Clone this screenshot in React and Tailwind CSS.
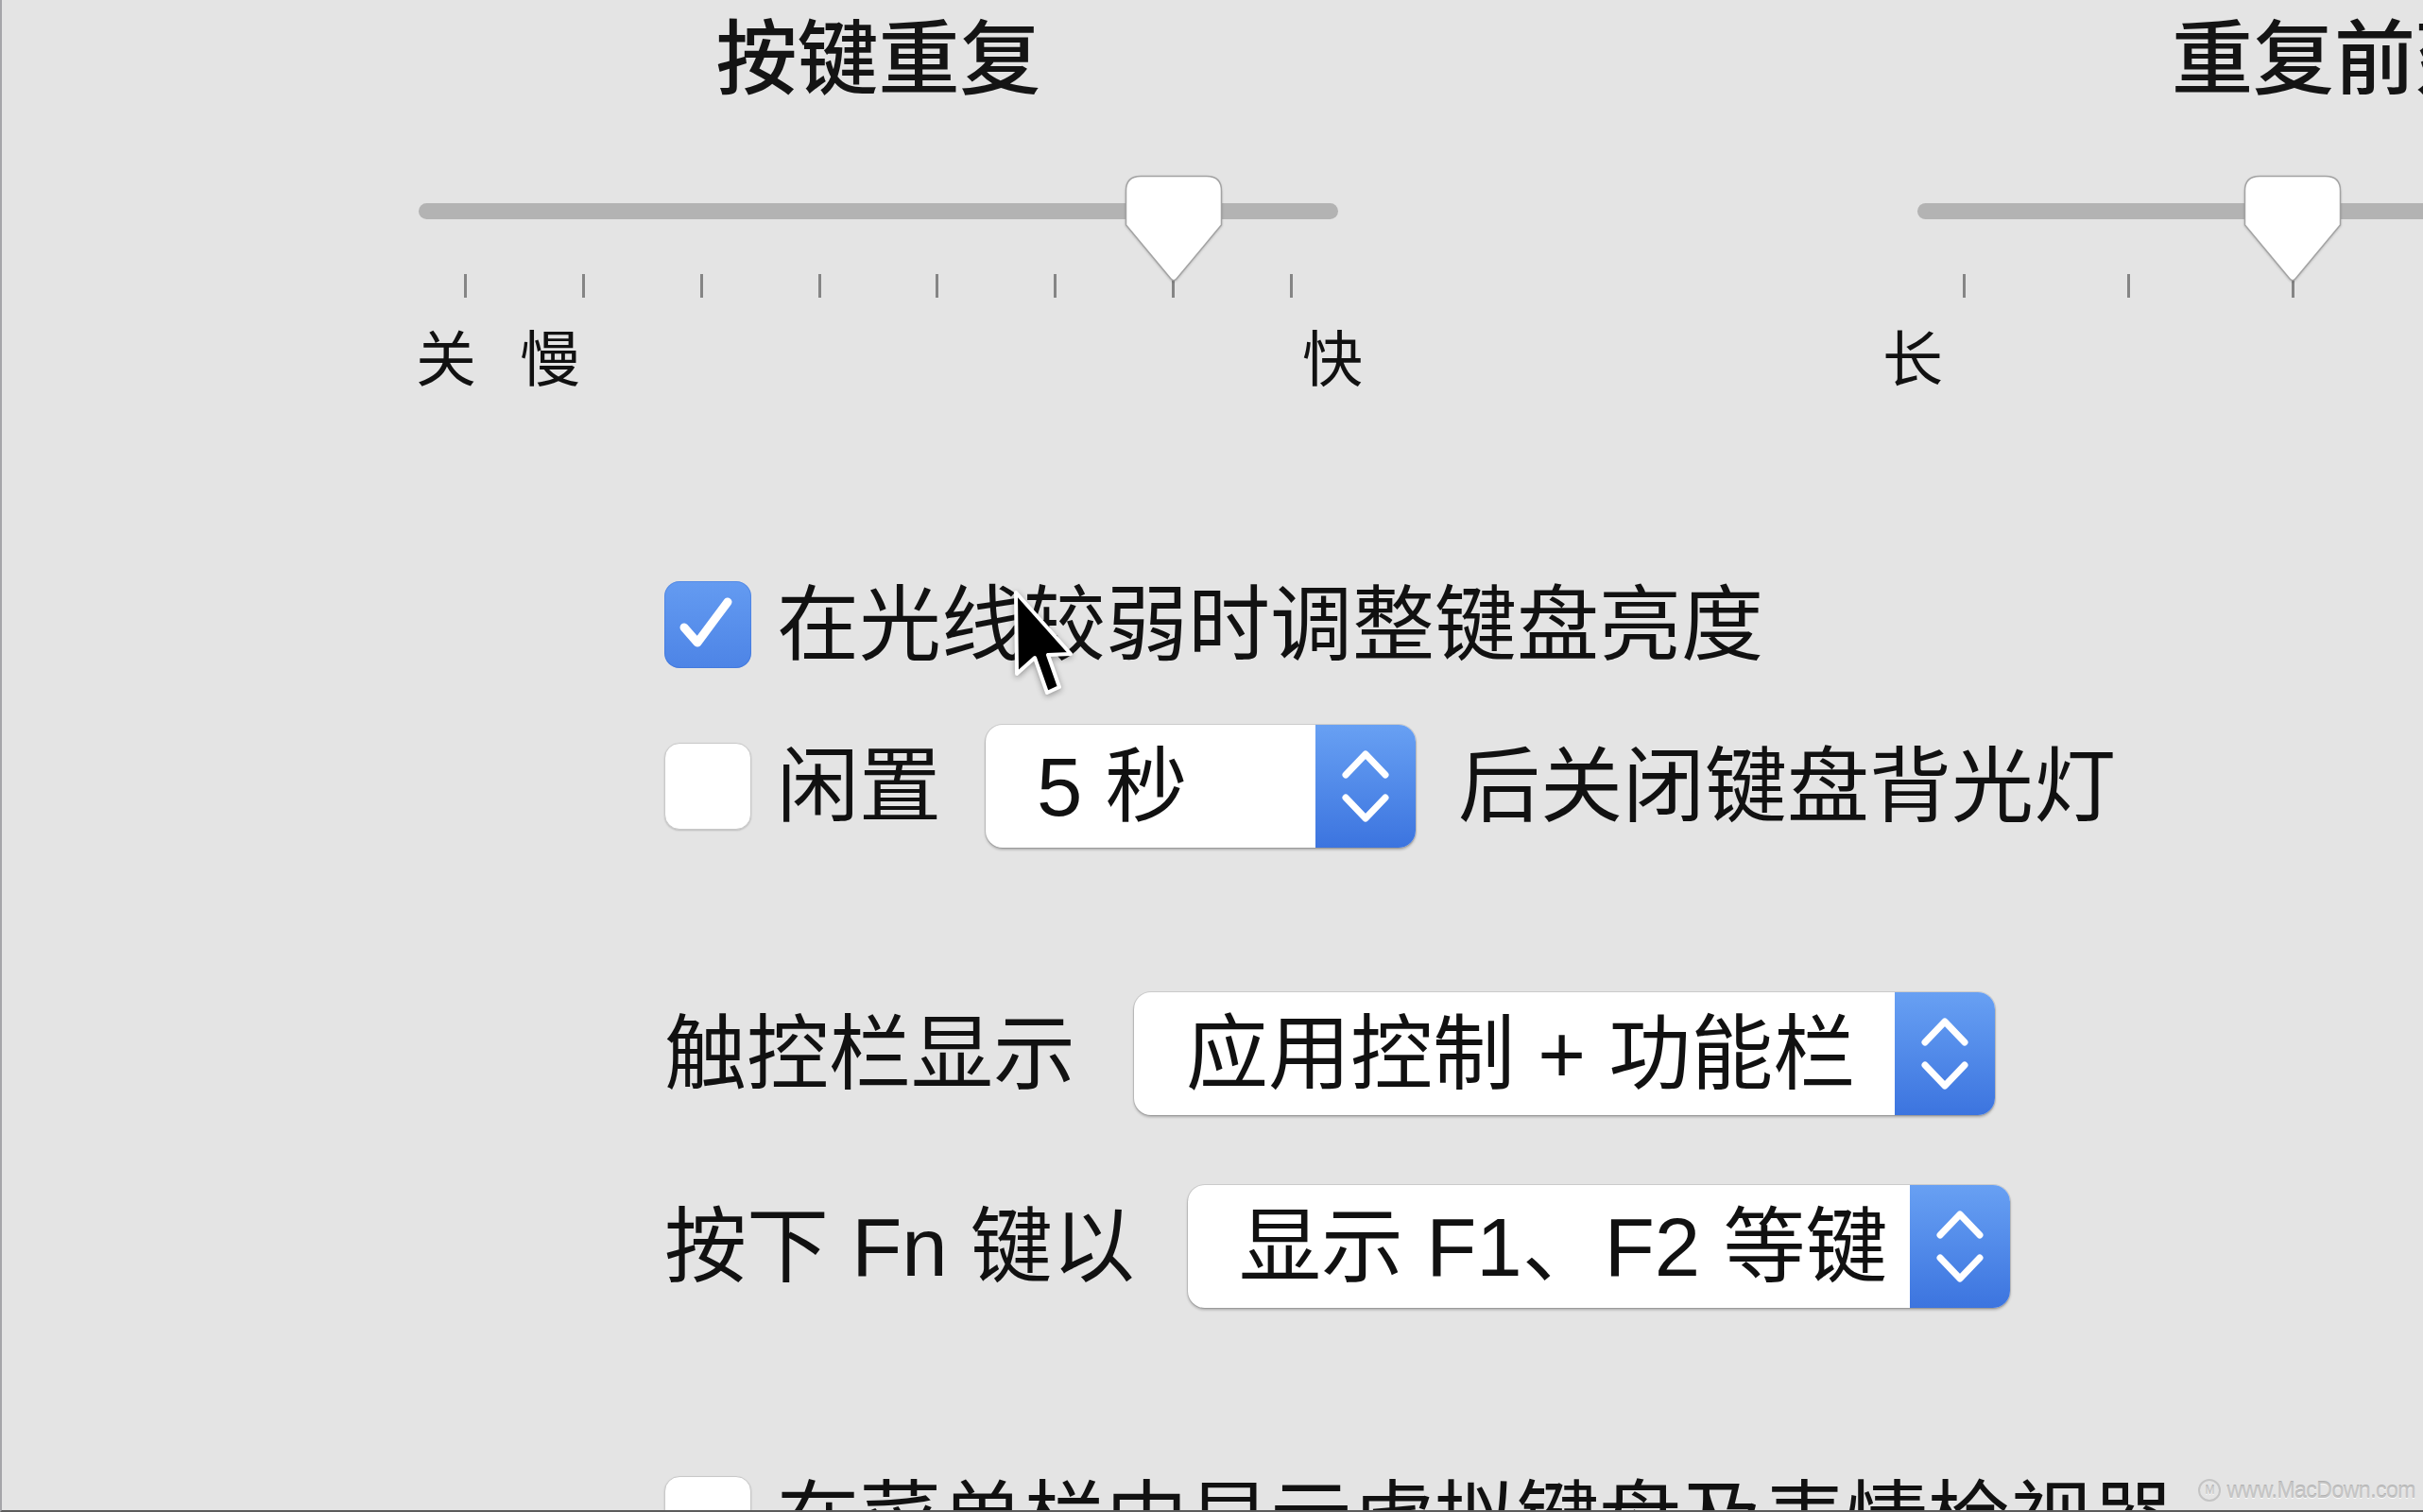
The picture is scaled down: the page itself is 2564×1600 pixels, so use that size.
import React from 'react';

const SANS = "font-['Liberation_Sans','Noto_Sans_CJK_SC',sans-serif]";

function Thumb() {
  return (
    <svg width="104" height="114" viewBox="0 0 104 114" className="drop-shadow-[0_1px_1px_rgba(0,0,0,0.18)]">
      <path
        d="M17 1.5H87Q102.5 1.5 102.5 17V53L55 110Q52 113.5 49 110L1.5 53V17Q1.5 1.5 17 1.5Z"
        fill="#fff"
        stroke="#a3a3a3"
        strokeWidth="1.5"
      />
    </svg>
  );
}

function Slider({ title, widthClass, count, gap, value, children }) {
  const ticks = Array.from({ length: count });
  return (
    <div className={`shrink-0 flex flex-col ${widthClass}`}>
      <h2 className="text-center text-[86px] leading-none font-medium text-[#141414] whitespace-nowrap">
        {title}
      </h2>
      <div className="relative mt-[79px] h-[130px]">
        <div className="mt-[30px] h-[17px] rounded-full bg-[#b3b3b3]" />
        <div className="mt-[58px] flex justify-between px-[48px]">
          {ticks.map((_, i) => (
            <div key={i} className="w-[3px] h-[25px] bg-[#858585]" />
          ))}
        </div>
        <div className="absolute top-0" style={{ left: 49.5 + value * gap - 52 }}>
          <Thumb />
        </div>
      </div>
      <div className="mt-[34px] flex text-[64px] leading-none text-[#111]">{children}</div>
    </div>
  );
}

function Checkbox({ checked }) {
  if (checked) {
    return (
      <div className="w-[92px] h-[92px] shrink-0 rounded-[16px] bg-linear-to-b from-[#649bf1] to-[#4d84e6] shadow-[inset_0_0_0_1px_rgba(40,90,200,0.25)]">
        <svg width="92" height="92" viewBox="0 0 92 92">
          <path
            d="M21 49L35 65L67 22"
            fill="none"
            stroke="#fff"
            strokeWidth="9"
            strokeLinecap="round"
            strokeLinejoin="round"
          />
        </svg>
      </div>
    );
  }
  return (
    <div className="w-[92px] h-[92px] shrink-0 rounded-[16px] bg-white border border-[#c9c9c9] shadow-[0_1px_2px_rgba(0,0,0,0.18)]" />
  );
}

function Select({ label, widthClass, padClass }) {
  return (
    <div
      className={`flex h-[130px] shrink-0 rounded-[18px] bg-white shadow-[0_0_0_1px_rgba(0,0,0,0.1),0_2px_3px_rgba(0,0,0,0.28)] ${widthClass}`}
    >
      <div className={`flex-1 flex items-center text-[87px] leading-none text-[#111] whitespace-nowrap ${padClass}`}>
        {label}
      </div>
      <div className="w-[106px] shrink-0 rounded-r-[18px] bg-linear-to-b from-[#68a0f3] to-[#3c74df] flex items-center justify-center">
        <svg width="60" height="90" viewBox="0 0 60 90">
          <path d="M9 33L30 11L51 33" fill="none" stroke="#fff" strokeWidth="7" strokeLinecap="round" strokeLinejoin="round" />
          <path d="M9 57L30 79L51 57" fill="none" stroke="#fff" strokeWidth="7" strokeLinecap="round" strokeLinejoin="round" />
        </svg>
      </div>
    </div>
  );
}

export default function App() {
  return (
    <div
      className={`relative w-[2564px] h-[1600px] overflow-hidden bg-[#e4e4e4] border-l-2 border-b-2 border-l-[#a5a5a9] border-b-[#5c5c5c] ${SANS}`}
    >
      {/* sliders */}
      <div className="flex pt-[20px] pl-[441px]">
        <Slider title="按键重复" widthClass="w-[973px]" count={8} gap={124.9} value={6}>
          <span className="ml-[-3px]">关</span>
          <span className="ml-[46px]">慢</span>
          <span className="ml-[764px]">快</span>
        </Slider>
        <div className="ml-[613px]">
          <Slider title="重复前延迟" widthClass="w-[968px]" count={6} gap={173.8} value={2}>
            <span className="ml-[-37px]">长</span>
          </Slider>
        </div>
      </div>

      {/* options */}
      <div className="flex flex-col pl-[701px] mt-[202px] text-[87px] leading-none text-[#111]">
        <div className="flex items-center h-[92px]">
          <Checkbox checked />
          <span className="ml-[27px] whitespace-nowrap">在光线较弱时调整键盘亮度</span>
        </div>

        <div className="flex items-center h-[130px] mt-[60px]">
          <Checkbox />
          <span className="ml-[27px] whitespace-nowrap">闲置</span>
          <div className="ml-[47px]">
            <Select label="5 秒" widthClass="w-[455px]" padClass="pl-[54px]" />
          </div>
          <span className="ml-[45px] whitespace-nowrap">后关闭键盘背光灯</span>
        </div>

        <div className="flex items-center h-[130px] mt-[153px]">
          <span className="w-[497px] shrink-0 whitespace-nowrap">触控栏显示</span>
          <Select label="应用控制 + 功能栏" widthClass="w-[911px]" padClass="pl-[55px]" />
        </div>

        <div className="flex items-center h-[130px] mt-[74px]">
          <span className="w-[554px] shrink-0 whitespace-nowrap">按下 Fn 键以</span>
          <Select label="显示 F1、F2 等键" widthClass="w-[870px]" padClass="pl-[54px]" />
        </div>

        <div className="flex items-center h-[92px] mt-[178px]">
          <Checkbox />
          <span className="ml-[27px] whitespace-nowrap">在菜单栏中显示虚拟键盘及表情检视器</span>
        </div>
      </div>

      {/* mouse pointer */}
      <svg
        className="absolute left-[1069px] top-[623px] drop-shadow-[0_2px_3px_rgba(0,0,0,0.35)]"
        width="72"
        height="122"
        viewBox="0 0 72 122"
      >
        <path
          d="M4 4L5 90L24 73L37 110L50 104L38 70L62 69Z"
          fill="#000"
          stroke="#fff"
          strokeWidth="4"
          strokeLinejoin="round"
        />
      </svg>

      {/* watermark */}
      <div className="absolute right-[8px] bottom-[9px] flex items-center gap-[6px] text-[#c4c4c4] [text-shadow:0_1px_0_#fafafa,0_-1px_0_#b0b0b0]">
        <div className="w-[24px] h-[24px] rounded-full border-2 border-[#c4c4c4] flex items-center justify-center text-[12px] leading-none">
          M
        </div>
        <span className="text-[23px] leading-none tracking-[-0.5px]">www.MacDown.com</span>
      </div>
    </div>
  );
}
